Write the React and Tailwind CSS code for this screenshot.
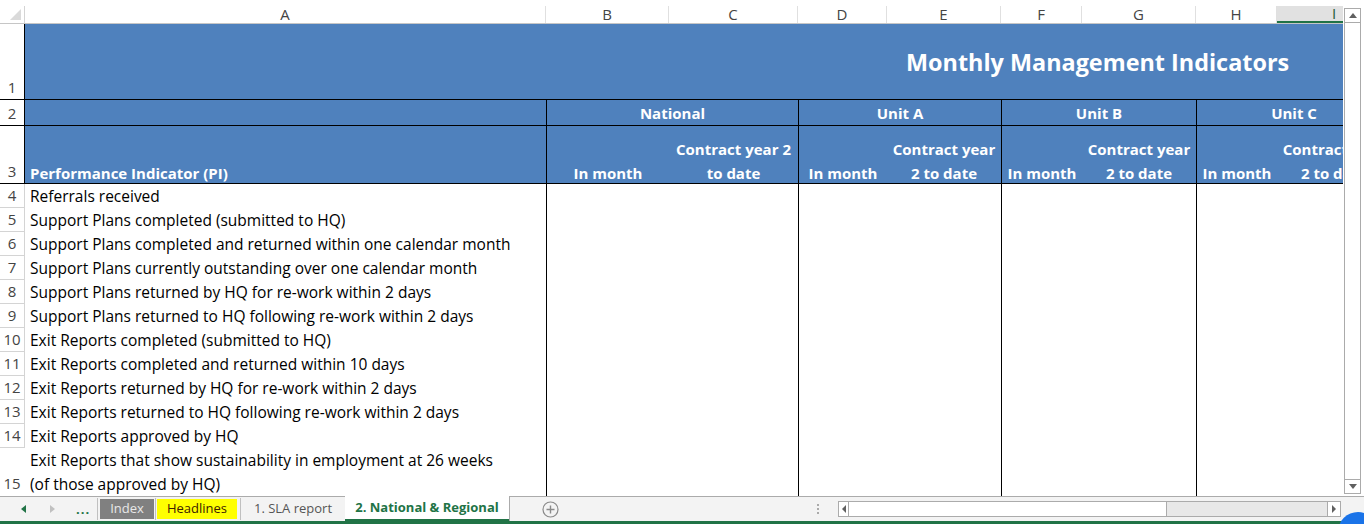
import React from "react";

const cols = [
  { l: "A", w: "w-[521px]" },
  { l: "B", w: "w-[123px]" },
  { l: "C", w: "w-[129px]" },
  { l: "D", w: "w-[89px]" },
  { l: "E", w: "w-[114px]" },
  { l: "F", w: "w-[81px]" },
  { l: "G", w: "w-[114px]" },
  { l: "H", w: "w-[81px]" },
];

const rows = [
  "Referrals received",
  "Support Plans completed (submitted to HQ)",
  "Support Plans completed and returned within one calendar month",
  "Support Plans currently outstanding over one calendar month",
  "Support Plans returned by HQ for re-work within 2 days",
  "Support Plans returned to HQ following re-work within 2 days",
  "Exit Reports completed (submitted to HQ)",
  "Exit Reports completed and returned within 10 days",
  "Exit Reports returned by HQ for re-work within 2 days",
  "Exit Reports returned to HQ following re-work within 2 days",
  "Exit Reports approved by HQ",
];

const units = [
  { name: "National", w: "w-[252px]", a: "w-[123px]", b: "w-[129px]", top: "Contract year 2", bot: "to date" },
  { name: "Unit A", w: "w-[203px]", a: "w-[89px]", b: "w-[114px]", top: "Contract year", bot: "2 to date" },
  { name: "Unit B", w: "w-[195px]", a: "w-[81px]", b: "w-[114px]", top: "Contract year", bot: "2 to date" },
  { name: "Unit C", w: "w-[195px]", a: "w-[81px]", b: "w-[114px]", top: "Contract year", bot: "2 to date" },
];

const RowNum = ({ n, h, line = "border-[#d4d4d4]" }) => (
  <div
    className={`w-[25px] shrink-0 ${h} border-r border-[#bfbfbf] border-b ${line} flex items-end justify-center pb-[1px] text-[15px] leading-[22px] text-[#444]`}>
    {n}
  </div>
);

const EmptyCells = () => (
  <>
    {units.map((u) => (
      <React.Fragment key={u.name}>
        <div className={`${u.a} shrink-0 border-l border-black`} />
        <div className={`${u.b} shrink-0`} />
      </React.Fragment>
    ))}
  </>
);

const Sheet = () => (
  <div className="w-[1343px] shrink-0 overflow-hidden flex flex-col">
    {/* column letters */}
    <div className="flex h-[24px] shrink-0 border-b border-[#c6c6c6] bg-white">
      <div className="w-[25px] shrink-0 relative border-r border-[#d4d4d4] mt-[6px]">
        <svg className="absolute right-[3px] bottom-[3px]" width="11" height="11" viewBox="0 0 11 11">
          <polygon points="11,0 11,11 0,11" fill="#dadada" />
        </svg>
      </div>
      {cols.map((c) => (
        <div
          key={c.l}
          className={`${c.w} shrink-0 mt-[6px] border-r border-[#e0e0e0] flex items-center justify-center text-[15px] text-[#444]`}>
          {c.l}
        </div>
      ))}
      <div className="w-[114px] shrink-0 mt-[6px] bg-[#e1e1e1] border-b-2 border-[#217346] flex items-center justify-center text-[15px] text-[#1e5e38]">
        I
      </div>
    </div>

    {/* row 1 title */}
    <div className="flex h-[76px] shrink-0">
      <RowNum n="1" h="h-[76px]" line="border-black" />
      <div className="flex-1 bg-[#4f81bd] border-b border-black flex items-center pl-[881px] pt-[3px]">
        <span className="text-[23.4px] font-bold text-white whitespace-nowrap">Monthly Management Indicators</span>
      </div>
    </div>

    {/* row 2 units */}
    <div className="flex h-[26px] shrink-0">
      <RowNum n="2" h="h-[26px]" line="border-black" />
      <div className="flex flex-1 bg-[#4f81bd] border-b border-black text-white font-bold text-[15px]">
        <div className="w-[521px] shrink-0" />
        {units.map((u) => (
          <div key={u.name} className={`${u.w} shrink-0 border-l border-black flex items-center justify-center pt-[2px] whitespace-nowrap`}>
            {u.name}
          </div>
        ))}
      </div>
    </div>

    {/* row 3 sub headers */}
    <div className="flex h-[58px] shrink-0">
      <RowNum n="3" h="h-[58px]" line="border-black" />
      <div className="flex flex-1 bg-[#4f81bd] border-b border-black text-white font-bold text-[15px] leading-[24px]">
        <div className="w-[521px] shrink-0 flex items-end pl-[5px]">
          <span className="translate-y-[2px]">Performance Indicator (PI)</span>
        </div>
        {units.map((u) => (
          <React.Fragment key={u.name}>
            <div className={`${u.a} shrink-0 border-l border-black flex items-end justify-center whitespace-nowrap`}>
              <span className="translate-y-[2px]">In month</span>
            </div>
            <div className={`${u.b} shrink-0 flex flex-col items-center justify-end whitespace-nowrap translate-y-[2px]`}>
              <span>{u.top}</span>
              <span>{u.bot}</span>
            </div>
          </React.Fragment>
        ))}
      </div>
    </div>

    {/* data rows */}
    {rows.map((r, i) => (
      <div key={r} className="flex h-[24px] shrink-0">
        <RowNum n={i + 4} h="h-[24px]" />
        <div className="w-[521px] shrink-0 flex items-center pl-[5px] pt-[2px] text-[15.5px] text-black whitespace-nowrap">{r}</div>
        <EmptyCells />
      </div>
    ))}

    <div className="flex flex-1 min-h-0">
      <RowNum n="15" h="h-[48px]" line="border-transparent" />
      <div className="w-[521px] shrink-0 flex flex-col justify-end pl-[5px] text-[15.5px] leading-[24px] text-black whitespace-nowrap">
        <span>Exit Reports that show sustainability in employment at 26 weeks</span>
        <span>(of those approved by HQ)</span>
      </div>
      <EmptyCells />
    </div>
  </div>
);

const VScroll = () => (
  <div className="flex-1 bg-white pt-[8px] pb-[2px] pl-[1px] pr-[3px] flex">
    <div className="flex-1 border border-[#ababab] flex flex-col justify-between bg-white">
      <div className="h-[14px] border-b border-[#ababab] flex items-center justify-center">
        <svg width="8" height="5" viewBox="0 0 8 5"><polygon points="0,5 8,5 4,0" fill="#606060" /></svg>
      </div>
      <div className="h-[14px] border-t border-[#ababab] flex items-center justify-center">
        <svg width="8" height="5" viewBox="0 0 8 5"><polygon points="0,0 8,0 4,5" fill="#606060" /></svg>
      </div>
    </div>
  </div>
);

const TabBar = () => (
  <div className="h-[25px] shrink-0 bg-[#f3f3f3] flex items-stretch text-[13px] font-['Open_Sans',sans-serif] relative">
    <div className="flex items-stretch border-t border-[#ababab] w-[345px] shrink-0">
      <div className="w-[97px] flex items-center">
        <svg className="ml-[21px]" width="5" height="8" viewBox="0 0 5 8"><polygon points="5,0 5,8 0,4" fill="#217346" /></svg>
        <svg className="ml-[24px]" width="5" height="8" viewBox="0 0 5 8"><polygon points="0,0 0,8 5,4" fill="#c0c0c0" /></svg>
        <span className="ml-[21px] text-[#217346] font-bold leading-none tracking-[1px]">...</span>
      </div>
      <div className="w-[1px] bg-[#c0c0c0] my-[1px]" />
      <div className="w-[54px] ml-[2px] my-[2px] bg-[#808080] text-[#e8e8e8] flex items-center justify-center">Index</div>
      <div className="w-[1px] bg-[#c0c0c0] my-[1px] ml-[1px]" />
      <div className="w-[80px] ml-[1px] my-[2px] bg-[#ffff00] text-[#3b2000] flex items-center justify-center">Headlines</div>
      <div className="w-[1px] bg-[#c0c0c0] my-[1px] ml-[3px]" />
      <div className="flex-1 text-[#555] flex items-center justify-center">1. SLA report</div>
    </div>
    <div className="w-[164px] shrink-0 bg-white border-b-2 border-[#217346] text-[#217346] font-bold flex items-center justify-center pt-[1px]">
      2. National &amp; Regional
    </div>
    <div className="flex-1 border-t border-l border-[#ababab] flex items-center">
      <svg className="ml-[32px]" width="17" height="17" viewBox="0 0 17 17">
        <circle cx="8.5" cy="8.5" r="7.5" fill="none" stroke="#8a8a8a" strokeWidth="1.2" />
        <path d="M8.5 4.5v8M4.5 8.5h8" stroke="#8a8a8a" strokeWidth="1.4" />
      </svg>
      <div className="ml-[258px] flex flex-col gap-[2px]">
        <div className="w-[2px] h-[2px] bg-[#aaa]" />
        <div className="w-[2px] h-[2px] bg-[#aaa]" />
        <div className="w-[2px] h-[2px] bg-[#aaa]" />
      </div>
      <div className="ml-[19px] w-[503px] h-[16px] flex border border-[#ababab] bg-[#e8e8e8]">
        <div className="w-[10px] bg-white border-r border-[#ababab] flex items-center justify-center">
          <svg width="4" height="8" viewBox="0 0 4 8"><polygon points="4,0 4,8 0,4" fill="#606060" /></svg>
        </div>
        <div className="w-[318px] bg-white border-r border-[#ababab]" />
        <div className="flex-1" />
        <div className="w-[13px] bg-white border-l border-[#ababab] flex items-center justify-center">
          <svg width="4" height="8" viewBox="0 0 4 8"><polygon points="0,0 0,8 4,4" fill="#606060" /></svg>
        </div>
      </div>
    </div>
  </div>
);

export default function App() {
  return (
    <div className="w-[1364px] h-[524px] overflow-hidden bg-white flex flex-col relative font-['Open_Sans',sans-serif]">
      <div className="flex h-[496px] shrink-0">
        <Sheet />
        <VScroll />
      </div>
      <TabBar />
      <div className="h-[3px] shrink-0 bg-[#217346]" />
      <div className="absolute right-[-14px] bottom-[-28px] w-[40px] h-[40px] rounded-full bg-[#1a73e8]" />
    </div>
  );
}
